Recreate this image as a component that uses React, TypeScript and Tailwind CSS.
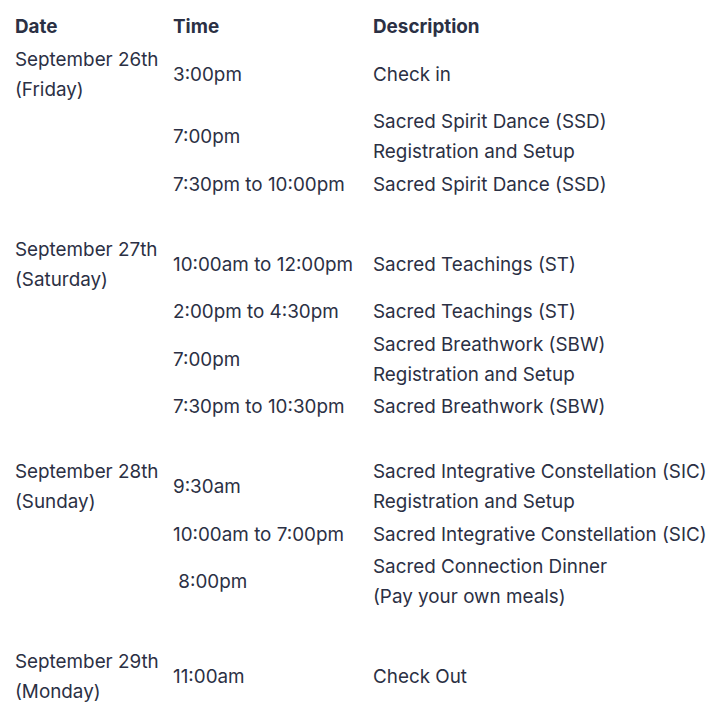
type Row = {
  date?: string[];
  time?: string;
  desc?: string[];
};

// blank rows separate the days
const rows: (Row | null)[] = [
  { date: ["September 26th", "(Friday)"], time: "3:00pm", desc: ["Check in"] },
  { time: "7:00pm", desc: ["Sacred Spirit Dance (SSD)", "Registration and Setup"] },
  { time: "7:30pm to 10:00pm", desc: ["Sacred Spirit Dance (SSD)"] },
  null,
  { date: ["September 27th", "(Saturday)"], time: "10:00am to 12:00pm", desc: ["Sacred Teachings (ST)"] },
  { time: "2:00pm to 4:30pm", desc: ["Sacred Teachings (ST)"] },
  { time: "7:00pm", desc: ["Sacred Breathwork (SBW)", "Registration and Setup"] },
  { time: "7:30pm to 10:30pm", desc: ["Sacred Breathwork (SBW)"] },
  null,
  {
    date: ["September 28th", "(Sunday)"],
    time: "9:30am",
    desc: ["Sacred Integrative Constellation (SIC)", "Registration and Setup"],
  },
  { time: "10:00am to 7:00pm", desc: ["Sacred Integrative Constellation (SIC)"] },
  { time: "\u00a08:00pm", desc: ["Sacred Connection Dinner", "(Pay your own meals)"] },
  null,
  { date: ["September 29th", "(Monday)"], time: "11:00am", desc: ["Check Out"] },
];

function Lines({ items }: { items?: string[] }) {
  return (
    <div className="flex flex-col">
      {(items ?? []).map((t) => (
        <span key={t} className="whitespace-nowrap">
          {t}
        </span>
      ))}
    </div>
  );
}

export default function App() {
  return (
    <div
      className="min-h-[720px] w-[728px] bg-white pl-[15px] pt-[11px] text-[18.85px] leading-[30px] text-[#2b3044]"
      style={{ fontFamily: "Inter, 'Noto Sans', sans-serif" }}
    >
      <div className="grid grid-cols-[158px_200px_1fr] font-bold">
        <div className="py-[1px]">Date</div>
        <div className="py-[1px]">Time</div>
        <div className="py-[1px]">Description</div>
      </div>
      {rows.map((r, i) =>
        r ? (
          <div key={i} className="mt-[0.5px] grid grid-cols-[158px_200px_1fr] items-center">
            <div className="self-start py-[1px]">
              <Lines items={r.date} />
            </div>
            <div className="whitespace-nowrap py-[1px]">{r.time}</div>
            <div className="py-[1px]">
              <Lines items={r.desc} />
            </div>
          </div>
        ) : (
          <div key={i} className="h-[32.5px]" />
        ),
      )}
    </div>
  );
}
